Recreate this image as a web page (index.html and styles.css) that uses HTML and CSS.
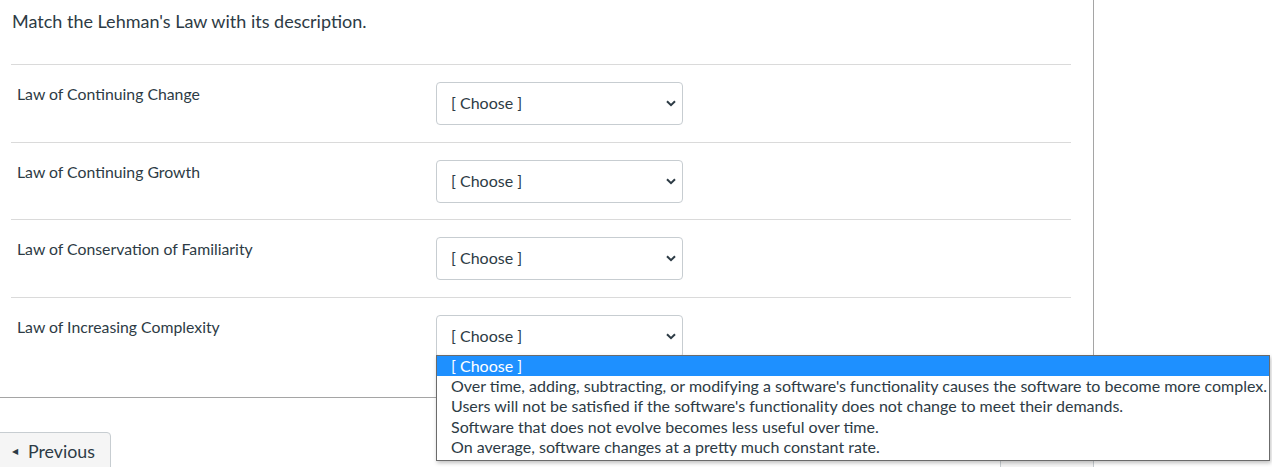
FILE: index.html
```html
<!DOCTYPE html>
<html>
<head>
<meta charset="utf-8">
<link rel="stylesheet" href="styles.css">
</head>
<body>
<div class="page">
  <div class="main">
    <div class="question">
      <p class="title">Match the Lehman's Law with its description.</p>
      <div class="answers">
        <div class="row">
          <div class="label">Law of Continuing Change</div>
          <div class="select"><span>[ Choose ]</span><svg class="chev" width="10" height="7" viewBox="0 0 10 7"><path d="M1 1.2 L5 5.2 L9 1.2" fill="none" stroke="#2d3b45" stroke-width="2"/></svg></div>
        </div>
        <div class="row">
          <div class="label">Law of Continuing Growth</div>
          <div class="select"><span>[ Choose ]</span><svg class="chev" width="10" height="7" viewBox="0 0 10 7"><path d="M1 1.2 L5 5.2 L9 1.2" fill="none" stroke="#2d3b45" stroke-width="2"/></svg></div>
        </div>
        <div class="row">
          <div class="label">Law of Conservation of Familiarity</div>
          <div class="select"><span>[ Choose ]</span><svg class="chev" width="10" height="7" viewBox="0 0 10 7"><path d="M1 1.2 L5 5.2 L9 1.2" fill="none" stroke="#2d3b45" stroke-width="2"/></svg></div>
        </div>
        <div class="row last">
          <div class="label">Law of Increasing Complexity</div>
          <div class="select"><span>[ Choose ]</span><svg class="chev" width="10" height="7" viewBox="0 0 10 7"><path d="M1 1.2 L5 5.2 L9 1.2" fill="none" stroke="#2d3b45" stroke-width="2"/></svg></div>
        </div>
      </div>
    </div>
    <div class="footer">
      <div class="btn prev"><span class="tri">&#9664;</span>Previous</div>
      <div class="btn next">Next<span class="tri">&#9654;</span></div>
    </div>
  </div>
  <div class="side"></div>
</div>
<div class="dropdown">
  <div class="opt sel">[ Choose ]</div>
  <div class="opt">Over time, adding, subtracting, or modifying a software's functionality causes the software to become more complex.</div>
  <div class="opt">Users will not be satisfied if the software's functionality does not change to meet their demands.</div>
  <div class="opt">Software that does not evolve becomes less useful over time.</div>
  <div class="opt">On average, software changes at a pretty much constant rate.</div>
</div>
</body>
</html>
```
FILE: styles.css
```css
html, body {
  margin: 0;
  padding: 0;
  background: #fff;
  font-family: Lato, "Noto Sans", sans-serif;
  color: #2d3b45;
  overflow: hidden;
}
.page {
  display: flex;
  height: 467px;
  width: 1272px;
}
.main {
  width: 1093px;
  border-right: 1px solid #a5a5a5;
  display: flex;
  flex-direction: column;
  flex: none;
}
.side { flex: 1; }
.question {
  padding: 0 22px 0 11px;
}
.title {
  margin: 0;
  padding: 10px 0 0 1px;
  font-size: 18px;
  line-height: 22px;
  height: 54px;
}
.answers {
  border-top: 1px solid #dadada;
}
.row {
  display: grid;
  grid-template-columns: 419px 247px;
  padding: 17px 0 16.67px 6px;
  border-bottom: 1px solid #dadada;
  align-items: start;
}
.row.last {
  border-bottom: none;
  padding-bottom: 39px;
}
.label {
  font-size: 15.8px;
  line-height: 20px;
  padding-top: 2px;
}
.select {
  box-sizing: border-box;
  height: 43px;
  border: 1px solid #c7cdd1;
  border-radius: 4px;
  display: flex;
  align-items: center;
  justify-content: space-between;
  padding: 0 6px 2px 14px;
  font-size: 16px;
}
.chev { display: block; margin-top: 2px; }
.footer {
  border-top: 1px solid #a5a5a5;
  flex: 1;
  display: flex;
  justify-content: space-between;
  align-items: flex-start;
  padding-top: 34px;
}
.btn {
  box-sizing: border-box;
  background: #f5f5f5;
  border: 1px solid #c7cdd1;
  border-radius: 4px;
  height: 40px;
  font-size: 17.8px;
  line-height: 38px;
  display: flex;
  align-items: center;
}
.prev {
  margin-left: -4px;
  width: 115px;
  padding-left: 15px;
  padding-bottom: 1px;
}
.prev .tri {
  font-size: 8px;
  margin-right: 10px;
}
.next {
  width: 94px;
  margin-right: -1px;
  padding-left: 20px;
}
.next .tri {
  font-size: 8px;
  margin-left: 10px;
}
.dropdown {
  position: absolute;
  left: 436px;
  top: 355px;
  width: 834px;
  box-sizing: border-box;
  border: 1px solid #6b6b6b;
  background: #fff;
  box-shadow: 1px 2px 4px rgba(0,0,0,0.25);
  padding-bottom: 3px;
}
.opt {
  font-size: 16px;
  line-height: 20.3px;
  padding-left: 14px;
  white-space: nowrap;
  color: #2d3b45;
}
.opt.sel {
  background: #1e90ff;
  color: #fff;
  line-height: 20px;
}
```
